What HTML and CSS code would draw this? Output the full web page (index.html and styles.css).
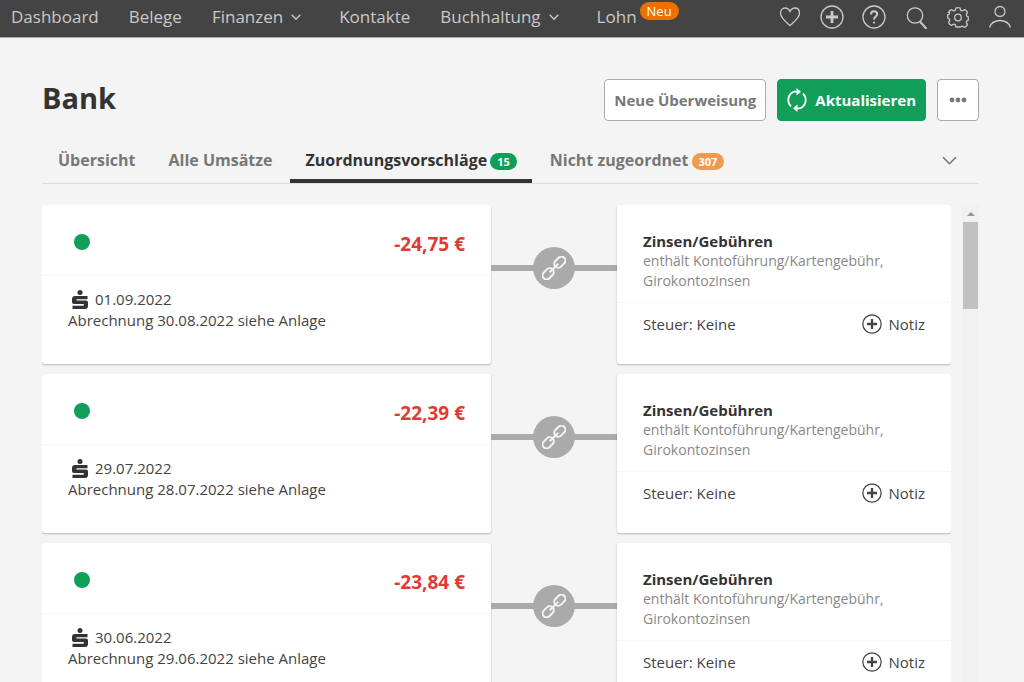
FILE: index.html
```html
<!DOCTYPE html>
<html lang="de">
<head>
<meta charset="utf-8">
<meta name="viewport" content="width=device-width, initial-scale=1">
<title>Bank</title>
<link rel="stylesheet" href="styles.css">
</head>
<body>
<svg class="sprite" aria-hidden="true">
  <symbol id="chevron" viewBox="0 0 14 14"><path d="M1 4l6 6 6-6"/></symbol>
  <symbol id="plus" viewBox="0 0 24 24"><circle cx="12" cy="12" r="11"/><path class="thick" d="M12 6v12M6 12h12"/></symbol>
  <symbol id="bank" viewBox="0 0 16 20"><circle cx="8" cy="2.500" r="2.500"/><path d="M3 6h12.500v3.200H4.500v1.300H14a2 2 0 0 1 2 2V16a3 3 0 0 1-3 3H.5v-3.300h11.200v-1.700H2a2 2 0 0 1-2-2V9a3 3 0 0 1 3-3z"/></symbol>
  <symbol id="link" viewBox="0 0 24 24"><g transform="rotate(-45 12 12)"><rect x="-2.500" y="8" width="12.500" height="8" rx="4"/><rect x="14" y="8" width="12.500" height="8" rx="4"/><path d="M6 12h12"/></g></symbol>
</svg>

<header class="topbar">
  <nav class="nav" aria-label="Hauptmenü">
    <a href="#">Dashboard</a>
    <a href="#">Belege</a>
    <a href="#">Finanzen <svg class="caret"><use href="#chevron"/></svg></a>
    <a href="#">Kontakte</a>
    <a href="#">Buchhaltung <svg class="caret"><use href="#chevron"/></svg></a>
    <a href="#">Lohn<span class="new">Neu</span></a>
  </nav>
  <div class="tools">
    <button aria-label="Favoriten"><svg viewBox="0 0 24 24"><path d="M12 20.500C8 17 2.500 13 2.500 8.300C2.500 5 4.500 3 7 3c2.300 0 4 1.200 5 3.400C13 4.200 14.700 3 17 3c2.500 0 4.500 2 4.500 5.300C21.500 13 16 17 12 20.500z"/></svg></button>
    <button aria-label="Neu anlegen"><svg viewBox="0 0 24 24"><use href="#plus"/></svg></button>
    <button aria-label="Hilfe"><svg viewBox="0 0 24 24"><circle cx="12" cy="12" r="11"/><path class="medium" d="M9 9.500C9 7.500 10.300 6.300 12 6.300s3.200 1.100 3.200 2.900C15.200 11.500 12 11.700 12 14.500M12 16.800v1.700"/></svg></button>
    <button aria-label="Suche"><svg viewBox="0 0 24 24"><circle cx="11" cy="10.500" r="7.700"/><path class="medium" d="M16 16.500L22.500 24"/></svg></button>
    <button aria-label="Einstellungen"><svg viewBox="0 0 24 24"><circle cx="12" cy="12.500" r="3.300"/><path d="M9.300 5.300l.7-2.300q2-.8 4 0l.7 2.300q1 .9 2.100.4l1.900-1q1.800.7 2.800 2.700l-1.100 2.100q-.2 1.200.6 1.800l1.300.6v3.200l-1.300.6q-.9 1-.6 2l1.100 1.900q-.8 2-2.800 2.700l-2-1q-1.200-.3-2 .5L14 22h-4l-.7-2.200q-.9-.8-2-.5l-2 1q-2-.7-2.800-2.700l1.100-1.900q.3-1.200-.6-2l-1.300-.6V9.900l1.300-.6q.8-.6.600-1.800L2.500 7.400q1-2 2.800-2.700l1.900 1q1.100.5 2.100-.4z"/></svg></button>
    <button aria-label="Profil"><svg viewBox="0 0 24 24"><circle cx="12" cy="6.500" r="5"/><path d="M1.500 22.500C3 18 7 15.500 12 15.500s9 2.500 10.500 7"/></svg></button>
  </div>
</header>

<main class="page">
  <div class="heading">
    <h1>Bank</h1>
    <div class="actions">
      <button class="btn">Neue Überweisung</button>
      <button class="btn primary"><svg viewBox="0 0 20 24"><path d="M7 3.700A9 9 0 0 0 4 18.500M16 5.500a9 9 0 0 1-3 14.800M7 3.700h4M13 20.300H9"/><path class="solid" d="M9.500 0L14 3.700 9.500 7.500zM10.500 16.500L6 20.300l4.500 3.700z"/></svg>Aktualisieren</button>
      <button class="btn more" aria-label="Mehr"><svg viewBox="0 0 18 6"><circle cx="3" cy="3" r="2.400"/><circle cx="9" cy="3" r="2.400"/><circle cx="15" cy="3" r="2.400"/></svg></button>
    </div>
  </div>

  <nav class="tabs" aria-label="Bank">
    <a href="#">Übersicht</a>
    <a href="#">Alle Umsätze</a>
    <a href="#" class="active" aria-current="page">Zuordnungsvorschläge<span class="count green">15</span></a>
    <a href="#">Nicht zugeordnet<span class="count orange">307</span></a>
    <button class="expand" aria-label="Mehr anzeigen"><svg><use href="#chevron"/></svg></button>
  </nav>

  <div class="scroller">
    <div class="list">
      <section class="match">
        <article class="card">
          <div class="summary"><span class="dot"></span><strong class="amount">-24,75 €</strong></div>
          <div class="details"><div class="date"><svg><use href="#bank"/></svg>01.09.2022</div><div>Abrechnung 30.08.2022 siehe Anlage</div></div>
        </article>
        <div class="connector"><button class="link" aria-label="Zuordnen"><svg><use href="#link"/></svg></button></div>
        <article class="card">
          <div class="category"><h2>Zinsen/Gebühren</h2><p>enthält Kontoführung/Kartengebühr, Girokontozinsen</p></div>
          <div class="tax"><span>Steuer: Keine</span><button class="note"><svg><use href="#plus"/></svg>Notiz</button></div>
        </article>
      </section>
      <section class="match">
        <article class="card">
          <div class="summary"><span class="dot"></span><strong class="amount">-22,39 €</strong></div>
          <div class="details"><div class="date"><svg><use href="#bank"/></svg>29.07.2022</div><div>Abrechnung 28.07.2022 siehe Anlage</div></div>
        </article>
        <div class="connector"><button class="link" aria-label="Zuordnen"><svg><use href="#link"/></svg></button></div>
        <article class="card">
          <div class="category"><h2>Zinsen/Gebühren</h2><p>enthält Kontoführung/Kartengebühr, Girokontozinsen</p></div>
          <div class="tax"><span>Steuer: Keine</span><button class="note"><svg><use href="#plus"/></svg>Notiz</button></div>
        </article>
      </section>
      <section class="match">
        <article class="card">
          <div class="summary"><span class="dot"></span><strong class="amount">-23,84 €</strong></div>
          <div class="details"><div class="date"><svg><use href="#bank"/></svg>30.06.2022</div><div>Abrechnung 29.06.2022 siehe Anlage</div></div>
        </article>
        <div class="connector"><button class="link" aria-label="Zuordnen"><svg><use href="#link"/></svg></button></div>
        <article class="card">
          <div class="category"><h2>Zinsen/Gebühren</h2><p>enthält Kontoführung/Kartengebühr, Girokontozinsen</p></div>
          <div class="tax"><span>Steuer: Keine</span><button class="note"><svg><use href="#plus"/></svg>Notiz</button></div>
        </article>
      </section>
    </div>
    <div class="scrollbar" aria-hidden="true"><svg viewBox="0 0 8 4"><path d="M0 4l4-4 4 4z"/></svg><div class="thumb"></div></div>
  </div>
</main>
</body>
</html>
```
FILE: styles.css
```css
* { box-sizing: border-box; }
body {
  margin: 0;
  height: 100vh;
  overflow: hidden;
  display: flex;
  flex-direction: column;
  background: #f4f4f4;
  color: #444;
  font-family: "Open Sans", "Noto Sans", sans-serif;
  font-size: 15px;
  line-height: 20px;
}
h1, h2, p { margin: 0; }
a { color: inherit; text-decoration: none; }
button { font: inherit; color: inherit; background: none; border: 0; padding: 0; cursor: pointer; }
svg { display: block; fill: none; stroke: currentColor; stroke-width: 1.5; flex: none; }
.sprite { position: absolute; width: 0; height: 0; }
.thick { stroke-width: 2.8; }
.medium { stroke-width: 2; }

.topbar {
  flex: none;
  display: flex;
  justify-content: space-between;
  align-items: center;
  height: 38px;
  padding: 0 12px 4px 11px;
  background: #444;
  border-bottom: 1px solid #aaa;
  color: #c9c9c9;
}
.nav { display: flex; gap: 30px; font-size: 17px; line-height: 24px; }
.nav a { display: flex; align-items: center; }
.caret { width: 10px; height: 10px; margin: 0 8px 0 8px; stroke-width: 2; }
.new {
  align-self: flex-start;
  margin: -3px 0 0 3px;
  padding: 0 7px;
  border-radius: 10px;
  background: #ea7100;
  color: #fff;
  font-size: 13px;
  line-height: 18px;
}
.tools { display: flex; gap: 18px; }
.tools svg { width: 24px; height: 24px; stroke-width: 1.3; }

.page { flex: 1; min-height: 0; display: flex; flex-direction: column; padding: 41px 45px 0 42px; }
.heading { display: flex; justify-content: space-between; align-items: center; }
h1 { padding-bottom: 4px; color: #333; font-size: 29px; line-height: 38px; }
.actions { display: flex; gap: 11px; }
.btn {
  display: flex;
  align-items: center;
  height: 42px;
  padding: 0 9px;
  border: 1px solid #aaa;
  border-radius: 4px;
  background: #fff;
  color: #777;
  font-weight: 700;
}
.primary { background: #109e58; border-color: #109e58; color: #fff; gap: 8px; }
.primary svg { width: 20px; height: 24px; stroke-width: 1.8; }
.solid { fill: currentColor; stroke: none; }
.more { padding: 0 11px; }
.more svg { width: 18px; height: 6px; fill: currentColor; stroke: none; }

.tabs {
  display: flex;
  gap: 2px;
  margin-top: 16px;
  border-bottom: 1px solid #ddd;
  color: #777;
  font-size: 16px;
  font-weight: 700;
}
.tabs a { display: flex; align-items: center; padding: 13px 15px 9px 16px; border-bottom: 4px solid transparent; }
.tabs .active { color: #333; border-color: #333; }
.count { margin: 2px 0 0 3px; padding: 0 7px; border-radius: 9px; color: #fff; font-size: 11px; line-height: 17px; }
.green { background: #109e58; }
.orange { background: #ef9a4c; }
.expand { margin-left: auto; padding: 0 22px 0 0; }
.expand svg { width: 15px; height: 15px; }

.scroller { flex: 1; min-height: 0; display: flex; gap: 11px; margin-top: 21px; }
.list { flex: 1; overflow: hidden; }
.match { display: grid; grid-template-columns: 449fr 126px 334fr; margin-bottom: 10px; }
.card { min-height: 159px; background: #fff; border-radius: 3px; box-shadow: 0 1px 2px rgba(0, 0, 0, .25); }
.summary {
  display: flex;
  justify-content: space-between;
  align-items: center;
  height: 71px;
  padding: 8px 26px 0 32px;
  border-bottom: 1px solid #f7f7f7;
}
.dot { width: 16px; height: 16px; margin-bottom: 4px; border-radius: 50%; background: #109e58; }
.amount { color: #e03a35; font-size: 19px; }
.details { padding: 13px 26px; line-height: 21px; }
.date { display: flex; align-items: center; gap: 7px; }
.date svg { width: 16px; height: 20px; margin-left: 4px; fill: #333; stroke: none; }
.connector {
  display: flex;
  justify-content: center;
  align-items: flex-start;
  padding-top: 42px;
  background: linear-gradient(#aaa, #aaa) 0 60px / 100% 6px no-repeat;
}
.link { display: grid; place-items: center; width: 42px; height: 42px; border-radius: 50%; background: #aaa; color: #f4f4f4; }
.link svg { width: 24px; height: 24px; overflow: visible; stroke-width: 2; }
.category { padding: 27px 26px 11px; border-bottom: 1px solid #f7f7f7; color: #888; font-size: 14px; }
h2 { color: #333; font-size: 15px; line-height: 19px; }
.tax { display: flex; justify-content: space-between; align-items: center; padding: 11px 26px; }
.note { display: flex; align-items: center; gap: 7px; }
.note svg { width: 20px; height: 20px; }
.scrollbar { flex: none; width: 17px; padding: 7px 1px 0; background: #f1f1f1; }
.scrollbar svg { width: 8px; height: 4px; margin: 0 auto 6px; fill: #999; stroke: none; }
.thumb { height: 87px; background: #c1c1c1; }
```
